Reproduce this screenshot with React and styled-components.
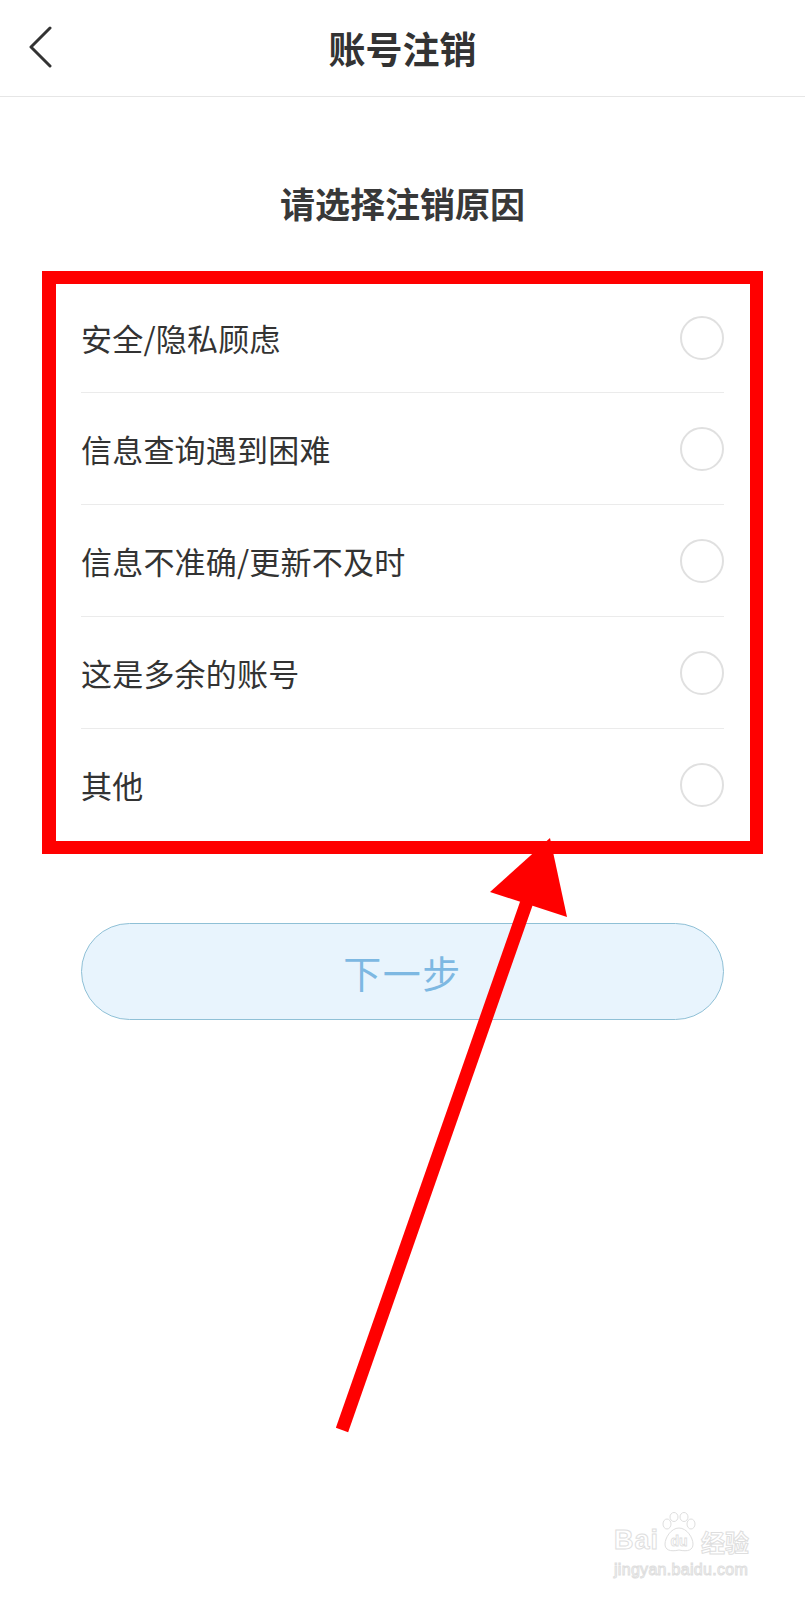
import React from 'react'
import styled, { createGlobalStyle } from 'styled-components'

const GlobalStyle = createGlobalStyle`
  html, body {
    margin: 0;
    padding: 0;
    background: #ffffff;
  }
  body {
    font-family: "Noto Sans CJK SC", "Noto Sans", sans-serif;
    color: #333333;
  }
`

const Page = styled.div`
  position: relative;
  width: 805px;
  height: 1600px;
  overflow: hidden;
  background: #ffffff;
`

const Header = styled.header`
  display: grid;
  grid-template-columns: 96px 1fr 96px;
  align-items: center;
  height: 96px;
  border-bottom: 1px solid #e6e6e6;
`

const BackButton = styled.button`
  display: flex;
  align-items: center;
  justify-content: flex-start;
  padding: 0 0 0 28px;
  height: 96px;
  border: none;
  background: none;
  cursor: pointer;
`

const Title = styled.h1`
  margin: 0;
  text-align: center;
  font-size: 37px;
  line-height: 40px;
  font-weight: 600;
  color: #333333;
`

const Subtitle = styled.h2`
  margin: 86px 0 0;
  text-align: center;
  font-size: 35px;
  line-height: 40px;
  font-weight: 600;
  color: #383838;
`

const Highlight = styled.div`
  margin: 48px 42px 0;
  border: 13px solid #ff0000;
  border-left-width: 14px;
  padding: 0 26px 0 25px;
  background: #ffffff;
`

const Row = styled.label`
  display: flex;
  align-items: center;
  justify-content: space-between;
  box-sizing: border-box;
  height: ${props => (props.first ? '109px' : '112px')};
  border-bottom: ${props => (props.last ? 'none' : '1px solid #ebebeb')};
  cursor: pointer;
`

const RowText = styled.span`
  font-size: 31px;
  line-height: 40px;
  color: #333333;
  letter-spacing: 0.2px;
`

const Radio = styled.span`
  box-sizing: border-box;
  width: 44px;
  height: 44px;
  border-radius: 50%;
  border: 2px solid #e0e0e0;
  background: #ffffff;
`

const NextButton = styled.button`
  display: block;
  box-sizing: border-box;
  width: 643px;
  height: 97px;
  margin: 69px auto 0;
  border: 1.5px solid #8fc0d6;
  border-radius: 49px;
  background: #e8f4fd;
  color: #7db8e2;
  font-family: "Noto Sans CJK SC", sans-serif;
  font-size: 38px;
  letter-spacing: 1.5px;
  cursor: pointer;
`

const Annotation = styled.svg`
  position: absolute;
  left: 0;
  top: 0;
  pointer-events: none;
`

const Watermark = styled.div`
  position: absolute;
  left: 614px;
  top: 1512px;
  display: flex;
  flex-direction: column;
  align-items: flex-start;
  pointer-events: none;
`

const MarkLine = styled.div`
  display: flex;
  align-items: flex-end;
  gap: 2px;
`

const MarkText = styled.span`
  font-family: "Liberation Sans", Arial, sans-serif;
  font-weight: ${props => (props.thin ? 400 : 700)};
  font-size: ${props => props.size || 26}px;
  line-height: 1;
  margin-top: ${props => (props.thin ? 8 : 0)}px;
  color: #ffffff;
  -webkit-text-stroke: 1px #dedede;
  letter-spacing: ${props => props.spacing || 0}px;
`

const MarkCjk = styled(MarkText)`
  font-family: "Noto Sans CJK SC", sans-serif;
  font-size: 24px;
  margin-left: 2px;
`

const reasons = [
  '安全/隐私顾虑',
  '信息查询遇到困难',
  '信息不准确/更新不及时',
  '这是多余的账号',
  '其他',
]

const Chevron = () => (
  <svg width="24" height="44" viewBox="0 0 24 44">
    <polyline
      points="22,2 3,21 22,40"
      fill="none"
      stroke="#333"
      strokeWidth="3"
      strokeLinecap="round"
      strokeLinejoin="round"
    />
  </svg>
)

const Paw = () => (
  <svg width="36" height="42" viewBox="0 0 36 42">
    <g fill="#fff" stroke="#dedede" strokeWidth="1">
      <ellipse cx="6" cy="12" rx="4" ry="5" />
      <ellipse cx="13" cy="5" rx="4" ry="4.5" />
      <ellipse cx="23" cy="5" rx="4" ry="4.5" />
      <ellipse cx="30" cy="12" rx="4" ry="5" />
      <path d="M18 16 C10 16 4 26 4 32 C4 38 9 40 18 38 C27 40 32 38 32 32 C32 26 26 16 18 16 Z" />
    </g>
    <text
      x="18"
      y="34"
      textAnchor="middle"
      fontFamily="Liberation Sans, Arial, sans-serif"
      fontWeight="700"
      fontSize="14"
      fill="#fff"
      stroke="#dedede"
      strokeWidth="0.8"
    >
      du
    </text>
  </svg>
)

const App = () => {
  return (
    <Page>
      <GlobalStyle />
      <Header>
        <BackButton aria-label="返回">
          <Chevron />
        </BackButton>
        <Title>账号注销</Title>
        <span />
      </Header>

      <Subtitle>请选择注销原因</Subtitle>

      <Highlight>
        {reasons.map((reason, i) => (
          <Row key={reason} first={i === 0} last={i === reasons.length - 1}>
            <RowText>{reason}</RowText>
            <Radio />
          </Row>
        ))}
      </Highlight>

      <NextButton>下一步</NextButton>

      {/* red arrow drawn over the screenshot */}
      <Annotation width="805" height="1600" viewBox="0 0 805 1600">
        <line x1="342" y1="1430" x2="530" y2="893" stroke="#ff0000" strokeWidth="13" />
        <polygon points="550,838 490,892 567,917" fill="#ff0000" />
      </Annotation>

      <Watermark>
        <MarkLine>
          <MarkText size={27} spacing={1}>Bai</MarkText>
          <Paw />
          <MarkCjk>经验</MarkCjk>
        </MarkLine>
        <MarkText thin size={16} spacing={0.3}>
          jingyan.baidu.com
        </MarkText>
      </Watermark>
    </Page>
  )
}

export default App
